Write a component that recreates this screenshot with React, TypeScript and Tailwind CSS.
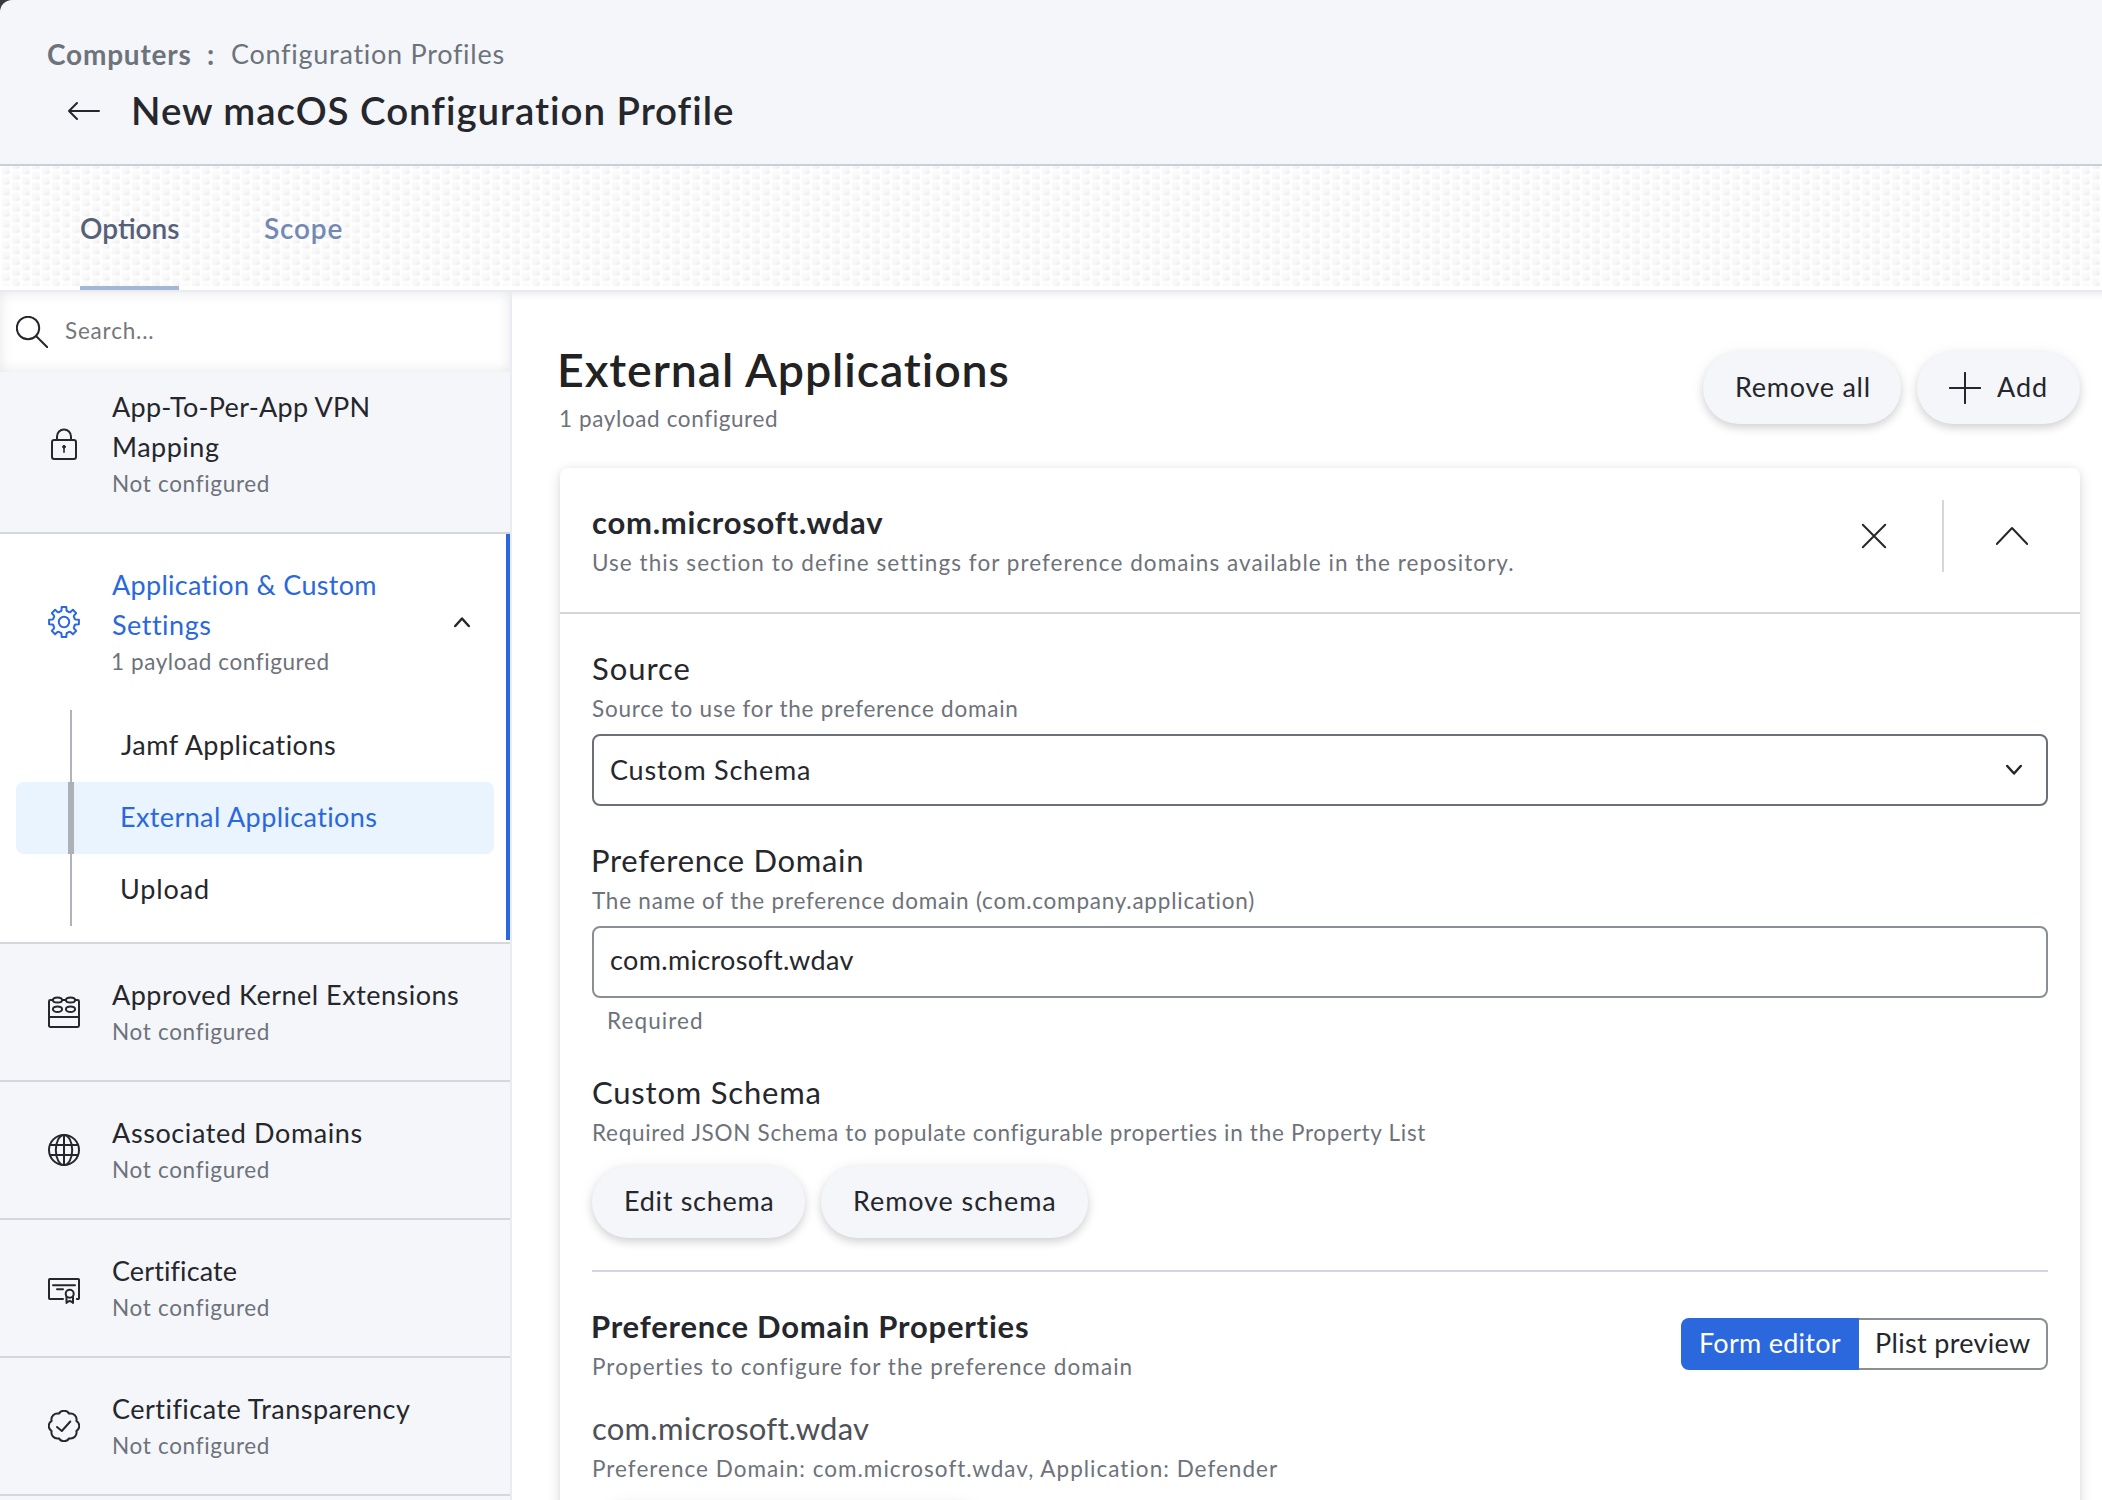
import type { ReactNode } from "react";

type IconProps = { children: ReactNode; className?: string; width?: number };

/** 32px line-icon canvas. */
function Icon({ children, className = "size-8", width = 2 }: IconProps) {
  return (
    <svg
      viewBox="0 0 32 32"
      className={`shrink-0 ${className}`}
      fill="none"
      stroke="currentColor"
      strokeWidth={width}
      strokeLinecap="round"
      strokeLinejoin="round"
    >
      {children}
    </svg>
  );
}

const polar = (r: number, deg: number) => {
  const a = (deg * Math.PI) / 180;
  return `${(16 + r * Math.sin(a)).toFixed(2)} ${(16 - r * Math.cos(a)).toFixed(2)}`;
};

const teeth = [0, 45, 90, 135, 180, 225, 270, 315];

const gearPath =
  teeth
    .map((a, i) => {
      const start = i === 0 ? "M" : "L";
      return `${start}${polar(15.1, a - 9)} L${polar(15.1, a + 9)} L${polar(12, a + 12)} Q${polar(10.6, a + 15)} ${polar(11.3, a + 22.5)} Q${polar(10.6, a + 30)} ${polar(12, a + 33)}`;
    })
    .join(" ") + " Z";

const sealPath =
  `M${polar(13.4, -22.5)} ` + teeth.map((a) => `A6 6 0 0 1 ${polar(13.4, a + 22.5)}`).join(" ") + " Z";

const LockIcon = () => (
  <Icon>
    <rect x="4" y="12" width="24" height="19" rx="2.2" />
    <path d="M9 12V8.4a7 7 0 0 1 14 0V12" />
    <circle cx="16" cy="18.8" r="1.4" fill="currentColor" strokeWidth="1" />
    <path d="M16 19v5.2" strokeWidth="1.6" />
  </Icon>
);

const GearIcon = () => (
  <Icon>
    <path d={gearPath} />
    <circle cx="16" cy="16" r="5.2" />
  </Icon>
);

const BrickIcon = () => (
  <Icon>
    <rect x="1" y="4" width="30" height="27" rx="1.4" />
    <path d="M1 21h30" />
    <g className="fill-[#f4f6fa]">
      <ellipse cx="9.5" cy="4" rx="4.6" ry="2.6" />
      <ellipse cx="22.5" cy="4" rx="4.6" ry="2.6" />
      <ellipse cx="9.5" cy="13.2" rx="4.6" ry="2.8" />
      <ellipse cx="22.5" cy="13.2" rx="4.6" ry="2.8" />
    </g>
  </Icon>
);

const GlobeIcon = () => (
  <Icon>
    <circle cx="16" cy="16" r="15" />
    <ellipse cx="16" cy="16" rx="8.2" ry="15" />
    <path d="M16 1v30M2 11h28M2 21h28" />
  </Icon>
);

const CertificateIcon = () => (
  <Icon>
    <path d="M15 27H1.8a.8.8 0 0 1-.8-.8V7.8A.8.8 0 0 1 1.8 7h28.4a.8.8 0 0 1 .8.8v18.4a.8.8 0 0 1-.8.8h-1.4" />
    <path d="M5 13.3h22M9 17.3h6" />
    <circle cx="21.7" cy="21.8" r="4" />
    <path d="M18.5 24.8V31M25 24.8V31M18.5 30.5l3.2-1.6 3.3 1.6" />
  </Icon>
);

const SealIcon = () => (
  <Icon>
    <path d={sealPath} />
    <path d="M9 17l4.8 4L22.3 11.5" />
  </Icon>
);

/** Embossed scale texture behind the tab bar. */
const Texture = () => (
  <svg className="absolute inset-x-0 top-0 h-[120px] w-full">
    <defs>
      <linearGradient id="scale" x1="0.2" y1="0" x2="0.8" y2="1">
        <stop offset="0.1" stopColor="#fafafa" />
        <stop offset="0.6" stopColor="#f8f8f8" />
        <stop offset="1" stopColor="#ebebeb" />
      </linearGradient>
      <pattern id="scales" width="20" height="10.67" patternUnits="userSpaceOnUse">
        <rect x="2" y="0" width="7.5" height="8" rx="1.5" fill="url(#scale)" />
        <rect x="12" y="-5.3" width="7.5" height="8" rx="1.5" fill="url(#scale)" />
        <rect x="12" y="5.3" width="7.5" height="8" rx="1.5" fill="url(#scale)" />
      </pattern>
    </defs>
    <rect width="100%" height="100%" fill="#fefefe" />
    <rect width="100%" height="100%" fill="url(#scales)" />
  </svg>
);

const type = {
  title: "text-[27px] leading-10",
  small: "text-[22.5px] leading-8 text-[#6e727a]",
  label: "text-[31px] leading-[48px]",
};

type PayloadProps = { icon: ReactNode; title: ReactNode; className?: string };

function Payload({ icon, title, className = "h-[138px]" }: PayloadProps) {
  return (
    <div className={`flex shrink-0 items-center border-b-2 border-[#d4d7dc] bg-[#f4f6fa] pl-12 ${className}`}>
      {icon}
      <div className="-mt-0.5 ml-8 whitespace-nowrap">
        <div className={type.title}>{title}</div>
        <div className={`${type.small} pt-px tracking-[0.68px]`}>Not configured</div>
      </div>
    </div>
  );
}

function PillButton({ children, className }: { children: ReactNode; className: string }) {
  return (
    <button
      className={`flex h-[72px] shrink-0 items-center rounded-full bg-[#f4f6fa] pb-0.5 pl-8 text-[27px] whitespace-nowrap shadow-[0_4px_8px_rgba(0,0,0,0.14),0_1px_16px_rgba(0,0,0,0.06)] ${className}`}
    >
      {children}
    </button>
  );
}

function FieldHead({ label, hint, labelClass, hintClass }: { label: string; hint: string; labelClass: string; hintClass: string }) {
  return (
    <div className="whitespace-nowrap">
      <div className={`${type.label} ${labelClass}`}>{label}</div>
      <div className={`${type.small} relative top-px ${hintClass}`}>{hint}</div>
    </div>
  );
}

function Header() {
  return (
    <header className="h-[166px] shrink-0 rounded-tl-[12px] border-b-2 border-[#c9cfd7] bg-[#f4f6fa] pt-[34px]">
      <div className="flex pl-[47px] leading-10 text-[#6c737b]">
        <span className="w-[160px] text-[28px] font-bold tracking-[0.8px]">Computers</span>
        <span className="w-6 text-[28px] font-bold">:</span>
        <span className="text-[27px] tracking-[0.73px]">Configuration Profiles</span>
      </div>
      <div className="mt-3 flex items-center pl-[68px]">
        <Icon className="mt-0.5 size-8">
          <path d="M1 16h30M9 8L1 16l8 8" />
        </Icon>
        <h1 className="ml-[31px] text-[38.5px] leading-[48px] font-semibold tracking-[0.95px]">New macOS Configuration Profile</h1>
      </div>
    </header>
  );
}

function Tabs() {
  return (
    <nav className="relative flex h-[126px] shrink-0 gap-[85px] border-b-2 border-[#e8ecf2] bg-white pl-20 text-[28px] font-semibold">
      <Texture />
      <div className="relative h-[124px] w-[99px] border-b-4 border-[#a3b6d3] pt-[42px] leading-10 tracking-[0px] whitespace-nowrap text-[#566079]">
        Options
      </div>
      <div className="relative pt-[42px] leading-10 tracking-[0.8px] text-[#7389b5]">Scope</div>
    </nav>
  );
}

function Sidebar() {
  return (
    <aside className="flex w-[512px] shrink-0 flex-col border-r-2 border-[#e9ecf2]">
      <div className="relative z-10 flex h-20 shrink-0 items-center bg-white pl-4 shadow-[inset_0_0_14px_rgba(0,0,0,0.1)]">
        <Icon>
          <circle cx="12" cy="12" r="11.2" />
          <path d="M20 20l11.500 11.500" />
        </Icon>
        <span className="-mt-0.5 ml-[17px] text-[22.5px] leading-8 tracking-[0.8px] text-[#767779]">Search...</span>
      </div>
      <div className="flex min-h-0 flex-1 flex-col overflow-hidden">
        <Payload
          className="-mt-4 h-[178px]"
          icon={<LockIcon />}
          title={
            <>
              <span className="tracking-[0.28px]">App-To-Per-App VPN</span>
              <br />
              <span className="tracking-[0.5px]">Mapping</span>
            </>
          }
        />
        <section className="relative h-[410px] shrink-0 border-b-2 border-[#d4d7dc] bg-white">
          <div className="absolute top-0 right-0 h-[406px] w-1 bg-[#2b68de]" />
          <div className="flex h-44 items-center pl-12">
            <span className="text-[#2b68de]">
              <GearIcon />
            </span>
            <div className="-mt-0.5 ml-8 w-[342px] whitespace-nowrap">
              <div className="text-[27px] leading-10 text-[#2b68de]">
                <span className="tracking-[0.3px]">Application &amp; Custom</span>
                <br />
                <span className="tracking-[0.5px]">Settings</span>
              </div>
              <div className={`${type.small} -ml-px pt-px tracking-[0.58px]`}>1 payload configured</div>
            </div>
            <Icon className="size-4" width={5}>
              <path d="M2.500 24L16 9l13.500 15" />
            </Icon>
          </div>
          <div className="px-4 text-[27px]">
            <div className="flex h-[72px] items-center pl-[54px]">
              <span className="h-full w-0.5 bg-[#b0b3b9]" />
              <span className="ml-[49px] pb-0.5 tracking-[0.48px]">Jamf Applications</span>
            </div>
            <div className="flex h-[72px] items-center rounded-lg bg-[#e9f4fe] pl-[52px]">
              <span className="h-full w-1.5 bg-[#adb0b6]" />
              <span className="ml-[46px] pb-0.5 tracking-[0.38px] text-[#2b68de]">External Applications</span>
            </div>
            <div className="flex h-[72px] items-center pl-[54px]">
              <span className="h-full w-0.5 bg-[#b0b3b9]" />
              <span className="ml-12 pb-0.5 tracking-[0.86px]">Upload</span>
            </div>
          </div>
        </section>
        <Payload icon={<BrickIcon />} title={<span className="tracking-[0.5px]">Approved Kernel Extensions</span>} />
        <Payload icon={<GlobeIcon />} title={<span className="tracking-[0.6px]">Associated Domains</span>} />
        <Payload icon={<CertificateIcon />} title={<span className="tracking-[0.1px]">Certificate</span>} />
        <Payload icon={<SealIcon />} title={<span className="tracking-[0.48px]">Certificate Transparency</span>} />
        <div className="flex-1 bg-[#f4f6fa]" />
      </div>
    </aside>
  );
}

function Card() {
  return (
    <section className="mt-[34px] h-[1100px] shrink-0 rounded-lg bg-white shadow-[0_4px_14px_rgba(0,0,0,0.13),0_0_6px_rgba(0,0,0,0.05)]">
      <div className="flex h-[146px] border-b-2 border-[#d5d6db] pt-[30px] pl-8">
        <div className="w-[1255px] whitespace-nowrap">
          <h3 className={`${type.label} font-bold tracking-[0.75px]`}>com.microsoft.wdav</h3>
          <p className={`${type.small} relative top-px tracking-[1.05px]`}>
            Use this section to define settings for preference domains available in the repository.
          </p>
        </div>
        <div className="mt-0.5 flex h-[72px] items-center">
          <Icon className="ml-[11px] size-8">
            <path d="M4.800 4.800l22.400 22.400M27.200 4.800L4.800 27.200" />
          </Icon>
          <span className="ml-[52px] h-full w-0.5 bg-[#d5d6db]" />
          <Icon className="ml-[52px] size-8">
            <path d="M.8 24L16 8l15.200 16" />
          </Icon>
        </div>
      </div>
      <div className="px-8 pt-[30px]">
        <FieldHead label="Source" labelClass="tracking-[0.95px]" hint="Source to use for the preference domain" hintClass="tracking-[0.77px]" />
        <div className="mt-2.5 flex h-[72px] items-center justify-between rounded-lg border-2 border-[#6b7078] pr-6 pl-4 text-[27px]">
          <span className="tracking-[0.78px]">Custom Schema</span>
          <Icon className="size-4" width={5}>
            <path d="M2.500 8L16 23 29.500 8" />
          </Icon>
        </div>
        <div className="mt-[30px]">
          <FieldHead
            label="Preference Domain"
            labelClass="-ml-px tracking-[0.68px]"
            hint="The name of the preference domain (com.company.application)"
            hintClass="tracking-[0.77px]"
          />
        </div>
        <div className="mt-2.5 flex h-[72px] items-center rounded-lg border-2 border-[#8a8e95] pb-[3px] pl-4 text-[27px] tracking-[0.34px]">
          com.microsoft.wdav
        </div>
        <div className={`${type.small} relative top-px mt-1.5 pl-[15px] tracking-[1.1px]`}>Required</div>
        <div className="mt-8">
          <FieldHead
            label="Custom Schema"
            labelClass="tracking-[0.8px]"
            hint="Required JSON Schema to populate configurable properties in the Property List"
            hintClass="tracking-[0.7px]"
          />
        </div>
        <div className="mt-[18px] flex gap-4">
          <PillButton className="w-[213px] tracking-[0.7px]">Edit schema</PillButton>
          <PillButton className="w-[267px] tracking-[0.92px]">Remove schema</PillButton>
        </div>
        <div className="mt-8 flex justify-between border-t-2 border-[#d5d6dd] pt-[30px]">
          <FieldHead
            label="Preference Domain Properties"
            labelClass="-ml-px font-bold tracking-[0.78px]"
            hint="Properties to configure for the preference domain"
            hintClass="tracking-[1.06px]"
          />
          <div className="mt-4 flex h-[52px] w-[367px] text-[27px] whitespace-nowrap">
            <div className="flex w-[178px] items-center rounded-l-lg bg-[#2b68de] pb-0.5 pl-[18px] tracking-[0.27px] text-white">Form editor</div>
            <div className="flex flex-1 items-center rounded-r-lg border-2 border-l-0 border-[#8a8e95] pb-0.5 pl-4 tracking-[0.32px]">Plist preview</div>
          </div>
        </div>
        <div className="mt-[22px]">
          <FieldHead
            label="com.microsoft.wdav"
            labelClass="tracking-[0.25px] text-[#4d5157]"
            hint="Preference Domain: com.microsoft.wdav, Application: Defender"
            hintClass="tracking-[1.02px]"
          />
        </div>
        <PillButton className="mt-[18px] w-[400px]">{null}</PillButton>
      </div>
    </section>
  );
}

export default function App() {
  return (
    <div className="h-[1500px] w-[2102px] overflow-hidden bg-[#3a3a3c] font-['Lato',sans-serif] text-[#25272c]">
      <div className="flex h-full flex-col">
        <Header />
        <Tabs />
        <div className="flex min-h-0 flex-1 bg-white">
          <Sidebar />
          <main className="flex flex-1 flex-col overflow-hidden pt-12 pr-[22px] pl-12 shadow-[inset_0_10px_8px_-8px_rgba(0,0,0,0.09)]">
            <div className="flex shrink-0 items-start justify-between">
              <div className="whitespace-nowrap">
                <h2 className="relative top-px -ml-[3px] text-[46.5px] leading-[56px] font-semibold tracking-[0.9px] text-[#222]">External Applications</h2>
                <p className={`${type.small} relative top-px mt-1.5 -ml-px tracking-[0.61px]`}>1 payload configured</p>
              </div>
              <div className="mt-3 flex gap-4">
                <PillButton className="w-[198px] tracking-[0.75px]">Remove all</PillButton>
                <PillButton className="w-[163px] tracking-[1px]">
                  <Icon className="mt-0.5 mr-4 size-8">
                    <path d="M16 .8v30.400M.8 16h30.400" />
                  </Icon>
                  Add
                </PillButton>
              </div>
            </div>
            <Card />
          </main>
        </div>
      </div>
    </div>
  );
}
